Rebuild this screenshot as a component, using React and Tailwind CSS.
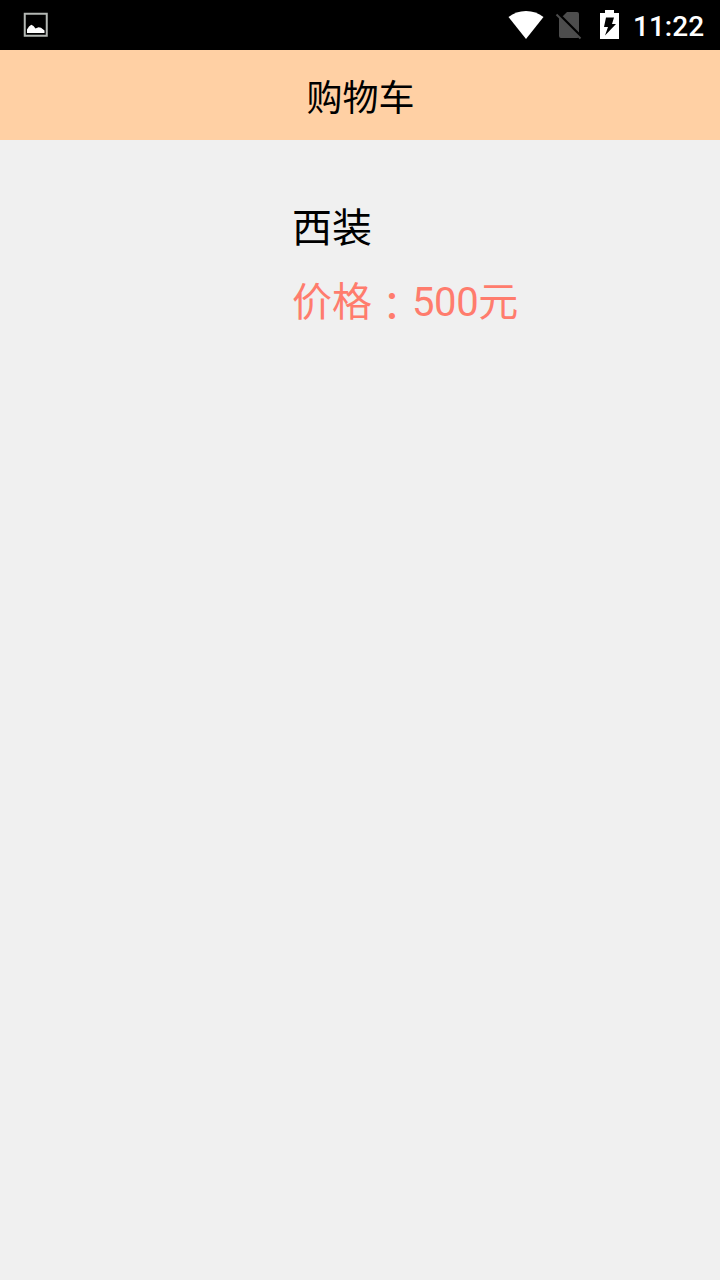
function PictureIcon() {
  return (
    <svg className="ml-[23px] h-[26px] w-[26px]" viewBox="0 0 26 26">
      <rect x="1.75" y="1.75" width="22" height="22" fill="none" stroke="#b4b8b4" strokeWidth="2" />
      <path d="M4 21V17.500L6 14.500L8.300 12.700L10.500 14L12.500 16.500L15.500 15.300L18 15.700L21.500 18.500V21Z" fill="#fff" />
    </svg>
  );
}

function StatusIcons() {
  return (
    <svg className="h-[50px] w-[120px]" viewBox="500 0 120 50">
      <path d="M508.500 17Q516 11 526 11T543.500 17L526 39Z" fill="#fff" />
      <path d="M563 16L567 12H577Q579 12 579 14V32.500L562.500 16ZM559 17L579 37L577.500 38H561Q559 38 559 36Z" fill="#4d4d4d" />
      <path d="M556.500 14.500L580.500 38.500" stroke="#4d4d4d" strokeWidth="2" />
      <path d="M600 13H605V10H614V13H619V39H600Z" fill="#fff" />
      <path d="M606 17.500H614L612 24H616L605 35.500L608 27H604Z" fill="#000" />
    </svg>
  );
}

export default function App() {
  return (
    <div className="flex h-[1280px] w-[720px] flex-col bg-[#f0f0f0] font-['Roboto','Noto_Sans_CJK_SC',sans-serif] text-black">
      <div className="flex h-[50px] items-center bg-black">
        <PictureIcon />
        <div className="ml-auto flex items-center">
          <StatusIcons />
          <span className="ml-[13px] w-[87px] pt-[3px] text-[28px] leading-[34px] font-medium whitespace-nowrap text-white">11:22</span>
        </div>
      </div>
      <header className="flex h-[90px] items-center justify-center bg-[#ffd0a4]">
        <h1 className="pt-[7px] pl-px text-[36px] leading-[48px]">购物车</h1>
      </header>
      <main className="flex flex-col pt-[60px] pl-[292px] text-[40px] leading-[58px]">
        <p>西装</p>
        <p className="mt-4 text-[#ff7c6d]">
          价格<span className="relative top-[5px] font-['Noto_Sans_CJK_TC',sans-serif] leading-none" lang="zh-TW">：</span>
          <span className="tracking-[-0.4px]">500</span>元
        </p>
      </main>
    </div>
  );
}
